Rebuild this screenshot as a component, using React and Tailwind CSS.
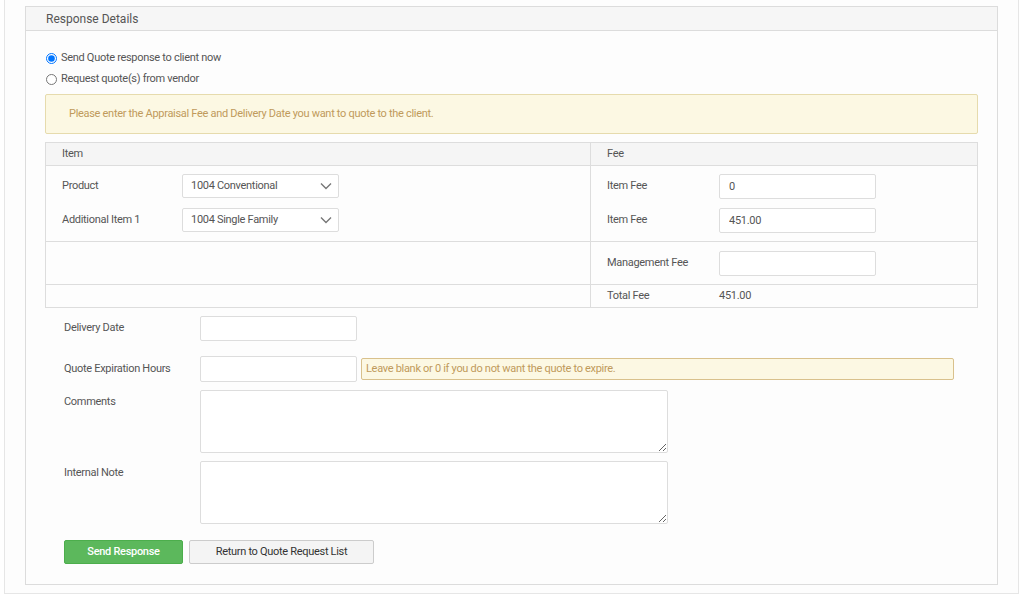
import { useState } from 'react'

const font = { fontFamily: 'Roboto, "Liberation Sans", sans-serif' }

function Chevron() {
  return (
    <svg width="12" height="8" viewBox="0 0 12 8" className="shrink-0">
      <path d="M1 1.5 L6 6.5 L11 1.5" fill="none" stroke="#777" strokeWidth="1.4" />
    </svg>
  )
}

function FakeSelect({ value }) {
  return (
    <div className="w-[157px] h-[24px] border border-[#ddd] rounded-[2px] bg-white flex items-center justify-between pl-[8px] pr-[6px] text-[#555]">
      <span>{value}</span>
      <Chevron />
    </div>
  )
}

function TextInput({ value = '', w = 'w-[157px]', h = 'h-[25px]' }) {
  return (
    <input
      defaultValue={value}
      className={`${w} ${h} border border-[#ddd] rounded-[2px] bg-white px-[9px] text-[11px] tracking-[-0.3px] text-[#555] outline-none`}
    />
  )
}

export default function App() {
  const [mode, setMode] = useState('client')
  return (
    <div className="bg-white min-h-[597px] pl-1 pr-[5px] text-[11px] tracking-[-0.3px] text-[#555]" style={font}>
      <div className="border-x border-b border-[#e6e6e6] bg-[#fdfdfd] px-5 pt-1.5 pb-2">
        <div className="border border-[#dcdcdc] bg-[#fdfdfd]">
          <div className="h-[24px] bg-[#f6f6f6] border-b border-[#dcdcdc] flex items-center pl-5 text-[12px] tracking-normal text-[#555]">
            Response Details
          </div>

          <div className="px-[19px] pt-[17px] pb-[20px]">
            <label className="flex items-center gap-[4px] h-[21px] pl-[1px]">
              <input type="radio" name="mode" checked={mode === 'client'} onChange={() => setMode('client')} className="m-0 w-[11px] h-[11px]" />
              <span>Send Quote response to client now</span>
            </label>
            <label className="flex items-center gap-[4px] h-[21px] pl-[1px]">
              <input type="radio" name="mode" checked={mode === 'vendor'} onChange={() => setMode('vendor')} className="m-0 w-[11px] h-[11px]" />
              <span>Request quote(s) from vendor</span>
            </label>

            <div className="mt-[4px] h-[40px] bg-[#fcf8e3] border border-[#e6dbad] rounded-[2px] flex items-center pl-[23px] text-[#c09a5b]">
              Please enter the Appraisal Fee and Delivery Date you want to quote to the client.
            </div>

            <div className="mt-[8px] border border-[#ddd] grid grid-cols-[545px_1fr]">
              <div className="h-[23px] bg-[#f5f5f5] border-b border-r border-[#ddd] flex items-center pl-4">Item</div>
              <div className="h-[23px] bg-[#f5f5f5] border-b border-[#ddd] flex items-center pl-4">Fee</div>

              <div className="border-r border-b border-[#ddd] pt-[8px] pb-[9px] pl-4 flex flex-col gap-[10px]">
                <div className="flex items-center">
                  <span className="w-[120px]">Product</span>
                  <FakeSelect value="1004 Conventional" />
                </div>
                <div className="flex items-center">
                  <span className="w-[120px]">Additional Item 1</span>
                  <FakeSelect value="1004 Single Family" />
                </div>
              </div>
              <div className="border-b border-[#ddd] pt-[8px] pb-[8px] pl-4 flex flex-col gap-[9px]">
                <div className="flex items-center">
                  <span className="w-[112px]">Item Fee</span>
                  <TextInput value="0" />
                </div>
                <div className="flex items-center">
                  <span className="w-[112px]">Item Fee</span>
                  <TextInput value="451.00" />
                </div>
              </div>

              <div className="border-r border-b border-[#ddd] h-[43px]" />
              <div className="border-b border-[#ddd] h-[43px] pl-4 flex items-center">
                <span className="w-[112px]">Management Fee</span>
                <TextInput />
              </div>

              <div className="border-r border-[#ddd] h-[22px]" />
              <div className="h-[22px] pl-4 flex items-center">
                <span className="w-[112px]">Total Fee</span>
                <span className="text-[#555]">451.00</span>
              </div>
            </div>

            <div className="mt-[8px] pl-[19px] flex flex-col">
              <div className="flex items-start">
                <span className="w-[136px] pt-[4px]">Delivery Date</span>
                <TextInput />
              </div>
              <div className="flex items-center mt-[15px]">
                <span className="w-[136px]">Quote Expiration Hours</span>
                <TextInput h="h-[26px]" />
                <div className="ml-[4px] w-[593px] h-[22px] bg-[#fcf8e3] border border-[#d9c18c] rounded-[2px] flex items-center pl-[4px] text-[#c09a5b]">
                  Leave blank or 0 if you do not want the quote to expire.
                </div>
              </div>
              <div className="flex items-start mt-[8px]">
                <span className="w-[136px] pt-[4px]">Comments</span>
                <textarea className="w-[468px] h-[63px] border border-[#ddd] rounded-[2px] bg-white outline-none" />
              </div>
              <div className="flex items-start mt-[8px]">
                <span className="w-[136px] pt-[4px]">Internal Note</span>
                <textarea className="w-[468px] h-[63px] border border-[#ddd] rounded-[2px] bg-white outline-none" />
              </div>
              <div className="flex items-center gap-[6px] mt-[16px]">
                <button className="w-[119px] h-[24px] bg-[#5cb85c] border border-[#4cae4c] rounded-[2px] text-white font-medium">
                  Send Response
                </button>
                <button className="w-[185px] h-[24px] bg-[#f4f4f4] border border-[#ccc] rounded-[2px] text-[#333]">
                  Return to Quote Request List
                </button>
              </div>
            </div>
          </div>
        </div>
      </div>
    </div>
  )
}
